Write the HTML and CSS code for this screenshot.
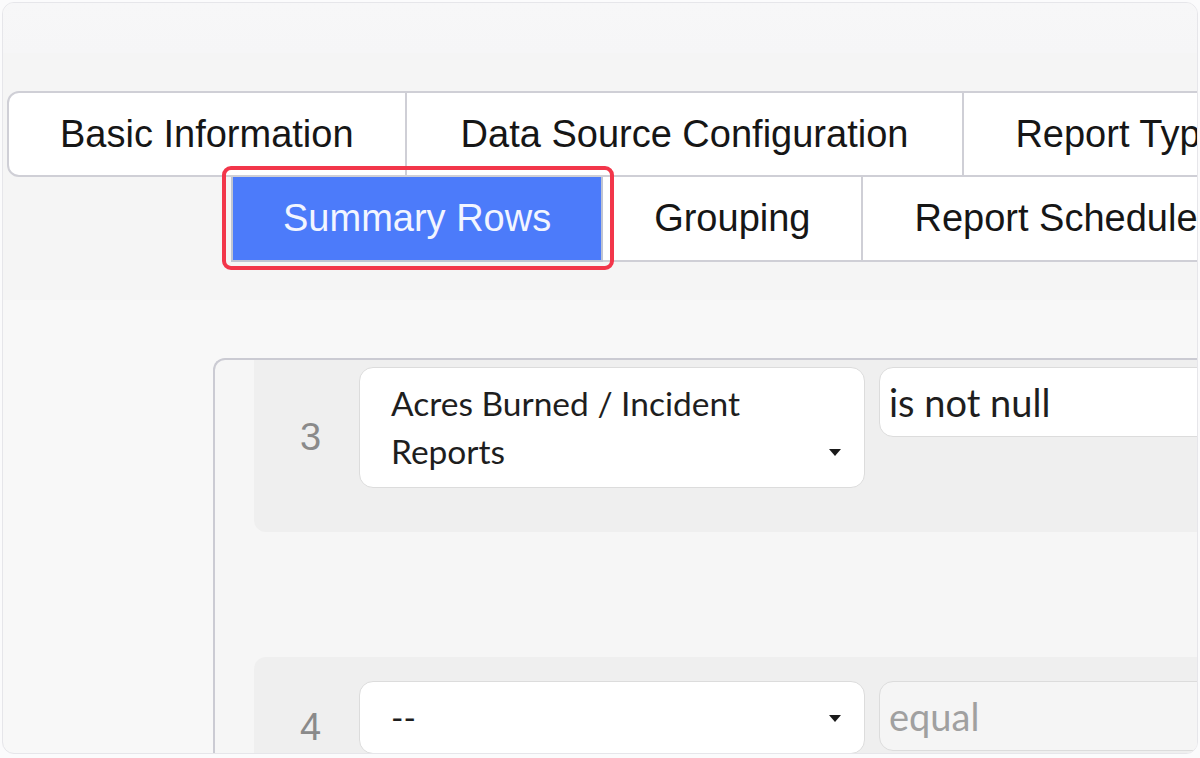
FILE: index.html
```html
<!DOCTYPE html>
<html lang="en">
<head>
  <meta charset="UTF-8" />
  <meta name="viewport" content="width=device-width, initial-scale=1" />
  <title>Report Builder - Summary Rows</title>
  <link rel="stylesheet" href="styles.css">
</head>
<body>

<div class="frame">
  <div class="topbar"></div>

  <section class="tabs-area">
    <div class="tab-row first-row">
      <div class="tab">Basic Information</div>
      <div class="tab wide">Data Source Configuration</div>
      <div class="tab">Report Type</div>
    </div>
    <div class="tab-row second-row">
      <div class="tab active">Summary Rows</div>
      <div class="tab">Grouping</div>
      <div class="tab">Report Scheduler</div>
      <div class="highlight"></div>
    </div>
  </section>

  <section class="content">
    <div class="panel">
      <div class="filter-row clipped">
        <div class="row-num">3</div>
        <div class="select-box">
          <div class="select-text">Acres Burned / Incident Reports</div>
          <div class="caret-cell"><span class="caret"></span></div>
        </div>
        <div class="text-input">is not null</div>
      </div>

      <div class="filter-row">
        <div class="row-num">4</div>
        <div class="select-box">
          <div class="select-text">--</div>
          <div class="caret-cell"><span class="caret"></span></div>
        </div>
        <div class="text-input disabled">equal</div>
      </div>
    </div>
  </section>
</div>

</body>
</html>
```

FILE: styles.css
```css
body {
  margin: 0;
  background: #fbfbfc;
  font-family: 'Liberation Sans', Arial, sans-serif;
}

.frame {
  margin: 2px;
  height: 750px;
  border: 1px solid #e6e6ea;
  border-radius: 12px;
  overflow: hidden;
  background: #f8f8f8;
}

.topbar {
  height: 50px;
  background: linear-gradient(#f7f7f8, #f6f6f7);
}

.tabs-area {
  background: #f5f5f5;
  padding: 38px 0 0 4px;
  height: 209px;
}

.tab-row {
  display: flex;
  position: relative;
}

.tab {
  flex: none;
  padding: 0 51px;
  height: 83px;
  line-height: 82px;
  font-size: 38px;
  color: #161616;
  background: #fff;
  white-space: nowrap;
  border-bottom: 2px solid #cfcfd6;
  border-right: 2px solid #cfcfd6;
}

.tab.wide {
  padding: 0 54px;
}

.first-row .tab {
  height: 82px;
  border-top: 2px solid #cfcfd6;
}

.first-row .tab:first-child {
  border-left: 2px solid #cfcfd6;
  border-radius: 12px 0 0 12px;
}

.second-row {
  margin-left: 224px;
}

.tab.active {
  background: #4c7bfa;
  color: #f2f5ff;
  border: 2px solid #bfc4d2;
  border-top: none;
  padding: 0 50px;
}

.highlight {
  position: absolute;
  left: -9px;
  top: -11px;
  width: 392px;
  height: 104px;
  box-sizing: border-box;
  border: 4px solid #f2364a;
  border-radius: 9px;
}

.content {
  padding: 58px 0 0 210px;
}

.panel {
  width: 1200px;
  border-top: 2px solid #cbcbd3;
  border-left: 2px solid #cbcbd3;
  border-radius: 12px 0 0 0;
  background: #f6f6f6;
  padding-left: 39px;
  height: 420px;
}

.filter-row {
  display: flex;
  align-items: flex-start;
  background: #efefef;
  border-radius: 12px 0 0 12px;
  padding: 24px 0 44px;
  margin-bottom: 125px;
}

.filter-row.clipped {
  padding-top: 7px;
  border-radius: 0 0 0 12px;
}

.row-num {
  flex: none;
  width: 97px;
  padding: 20px 0 0 8px;
  align-self: center;
  text-align: center;
  font-size: 38px;
  color: #8a8a8a;
}

.select-box {
  flex: none;
  width: 504px;
  display: flex;
  align-items: flex-end;
  background: #fff;
  border: 1px solid #dcdcdc;
  border-radius: 14px;
  padding: 11px 0 12px;
}

.select-text {
  flex: 1;
  padding-left: 31px;
  font-family: Lato, 'Noto Sans', sans-serif;
  font-size: 33.5px;
  line-height: 48px;
  color: #1e1e1e;
}

.caret-cell {
  flex: none;
  width: 50px;
  height: 46px;
  display: flex;
  align-items: center;
  justify-content: center;
}

.caret {
  border-left: 6px solid transparent;
  border-right: 6px solid transparent;
  border-top: 7px solid #1a1a1a;
  margin-right: 8px;
}

.text-input {
  flex: none;
  width: 400px;
  margin-left: 14px;
  height: 68px;
  line-height: 68px;
  padding-left: 9px;
  background: #fff;
  border: 1px solid #dcdcdc;
  border-radius: 14px;
  font-family: Lato, 'Noto Sans', sans-serif;
  font-size: 38px;
  color: #1e1e1e;
}

.text-input.disabled {
  background: #f5f5f5;
  color: #a0a0a0;
}
```
